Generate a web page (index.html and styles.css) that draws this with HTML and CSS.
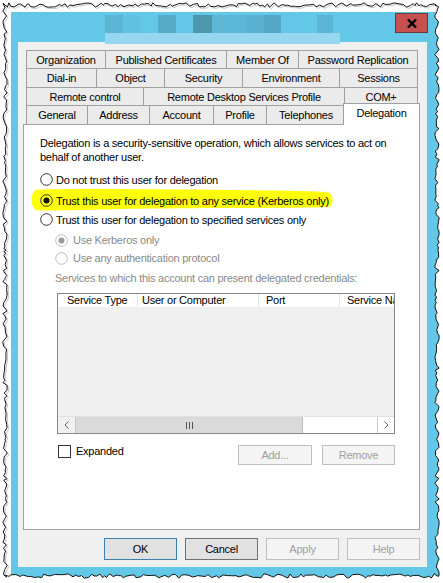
FILE: index.html
```html
<!DOCTYPE html>
<html>
<head>
<meta charset="utf-8">
<title>Delegation</title>
<link rel="stylesheet" href="styles.css">
</head>
<body>
<div class="frame">
  <div class="titlebar">
    <span class="blk b1"></span><span class="blk b2"></span><span class="blk b3"></span><span class="blk b4"></span><span class="blk b5"></span><span class="blk b6"></span><span class="blk b7"></span><span class="blk b8"></span>
    <div class="close"><svg width="10" height="9" viewBox="0 0 10 9"><path d="M1,0.5L9,8.5M9,0.5L1,8.5" stroke="#000" stroke-width="2.4" fill="none"/></svg></div>
  </div>
  <div class="client">
    <div class="tabs">
      <div class="row r1">
        <div class="tab">Organization</div><div class="tab">Published Certificates</div><div class="tab">Member Of</div><div class="tab last">Password Replication</div>
      </div>
      <div class="row r2">
        <div class="tab">Dial-in</div><div class="tab">Object</div><div class="tab">Security</div><div class="tab">Environment</div><div class="tab last">Sessions</div>
      </div>
      <div class="row r3">
        <div class="tab">Remote control</div><div class="tab">Remote Desktop Services Profile</div><div class="tab last">COM+</div>
      </div>
      <div class="row r4">
        <div class="tab">General</div><div class="tab">Address</div><div class="tab">Account</div><div class="tab">Profile</div><div class="tab">Telephones</div><div class="tab last sel">Delegation</div>
      </div>
    </div>
    <div class="panel">
      <svg class="hl" width="304" height="24" viewBox="0 0 304 24"><path d="M7,1.5 C40,0.5 120,1 200,2 C250,2.5 290,3 298,4.5 C304,6 304,17 299,19 C260,20.5 200,19.5 120,20.5 C70,21.5 30,22.5 8,22.5 C0,22.5 -0.5,3 7,1.5 Z" fill="#FFFF0A"/></svg>
      <p class="desc">Delegation is a security-sensitive operation, which allows services to act on<br>behalf of another user.</p>
      <div class="opt o1">
        <svg class="radio" width="13" height="13" viewBox="0 0 13 13"><circle cx="6.5" cy="6.5" r="5.8" fill="none" stroke="#333" stroke-width="1"/></svg>
        <span>Do not trust this user for delegation</span>
      </div>
      <div class="opt o2">
        <svg class="radio" width="13" height="13" viewBox="0 0 13 13"><circle cx="6.5" cy="6.5" r="5.8" fill="none" stroke="#333" stroke-width="1"/><circle cx="6.5" cy="6.5" r="3" fill="#111"/></svg>
        <span>Trust this user for delegation to any service (Kerberos only)</span>
      </div>
      <div class="opt o3">
        <svg class="radio" width="13" height="13" viewBox="0 0 13 13"><circle cx="6.5" cy="6.5" r="5.8" fill="none" stroke="#333" stroke-width="1"/></svg>
        <span>Trust this user for delegation to specified services only</span>
      </div>
      <div class="sub">
        <div class="opt sopt dis">
          <svg class="radio" width="13" height="13" viewBox="0 0 13 13"><circle cx="6.5" cy="6.5" r="5.8" fill="#fff" stroke="#BCBCBC" stroke-width="1"/><circle cx="6.5" cy="6.5" r="3" fill="#9A9A9A"/></svg>
          <span>Use Kerberos only</span>
        </div>
        <div class="opt sopt dis">
          <svg class="radio" width="13" height="13" viewBox="0 0 13 13"><circle cx="6.5" cy="6.5" r="5.8" fill="#fff" stroke="#BCBCBC" stroke-width="1"/></svg>
          <span>Use any authentication protocol</span>
        </div>
        <div class="label dis">Services to which this account can present delegated credentials:</div>
      </div>
      <div class="list">
        <div class="lhead">
          <div class="col c1">Service Type</div><div class="col c2">User or Computer</div><div class="col c3">Port</div><div class="col c4">Service Name</div>
        </div>
        <div class="lbody"></div>
        <div class="scroll">
          <div class="sbtn sleft"><svg width="5" height="8" viewBox="0 0 5 8"><path d="M4.5,0.5L1,4L4.5,7.5" stroke="#606060" fill="none"/></svg></div>
          <div class="thumb"><svg width="7" height="7" viewBox="0 0 7 7"><path d="M0.5,0V7M3.5,0V7M6.5,0V7" stroke="#555" fill="none"/></svg></div>
          <div class="track"></div>
          <div class="sbtn sright"><svg width="5" height="8" viewBox="0 0 5 8"><path d="M0.5,0.5L4,4L0.5,7.5" stroke="#606060" fill="none"/></svg></div>
        </div>
      </div>
      <div class="below">
        <span class="check"></span>
        <span class="chklabel">Expanded</span>
        <div class="btn dbtn add">Add...</div>
        <div class="btn dbtn remove">Remove</div>
      </div>
    </div>
    <div class="buttons">
      <div class="btn ok">OK</div>
      <div class="btn cancel">Cancel</div>
      <div class="btn dbtn">Apply</div>
      <div class="btn dbtn">Help</div>
    </div>
  </div>
</div>
<div class="band"></div>
<svg class="torn" width="443" height="583" viewBox="0 0 443 583">
  <path id="tornShadow" d="" fill="none" stroke="#C4C4C4" stroke-width="1" transform="translate(1.5,1.5)"/>
  <path id="tornMask" d="" fill="#fff" fill-rule="evenodd"/>
  <path id="tornLine" d="" fill="none" stroke="#111" stroke-width="1"/>
</svg>
<script src="script.js"></script>
</body>
</html>
```
FILE: styles.css
```css
* { box-sizing: border-box; margin: 0; padding: 0; }
html, body { background: #fff; }
body {
  margin: 0;
  width: 443px;
  height: 583px;
  overflow: hidden;
  position: relative;
  font-family: "Liberation Sans", Arial, sans-serif;
  font-size: 11px;
  letter-spacing: -0.25px;
  color: #000;
}
.frame {
  margin: 12px 0 0 11px;
  width: 430px;
  height: 568px;
  background: #63C8E8;
  display: flex;
  flex-direction: column;
}
.titlebar {
  height: 30px;
  display: flex;
  align-items: flex-start;
  padding: 3px 0 0 94px;
}
.blk { display: block; height: 18px; flex: none; }
.b1 { width: 18px; background: #5AB6D4; }
.b2 { width: 17px; background: #60C1E0; }
.b3 { width: 18px; margin-left: 18px; background: #56ABC9; }
.b4 { width: 19px; margin-left: 17px; background: #4B97AD; }
.b5 { width: 35px; background: #5CB6D6; }
.b6 { width: 17px; background: #59B0D0; }
.b7 { width: 17px; background: #53A6C5; }
.b8 { width: 16px; margin-left: 36px; background: #5BB6D5; }
.close {
  margin-left: auto;
  margin-right: 13px;
  margin-top: -2px;
  width: 33px;
  height: 20px;
  background: #C75050;
  border: 1px solid #6A3A3A;
  display: flex;
  align-items: center;
  justify-content: center;
}
.band {
  position: absolute;
  left: 105px;
  top: 33px;
  width: 235px;
  height: 11px;
  background: #96D6EE;
}
.client {
  margin: 0 14px 0 7px;
  height: 525px;
  background: #F0F0F0;
  padding-top: 8px;
}
.tabs { padding-left: 8px; }
.row { display: grid; width: 392px; }
.r1 { height: 18px; grid-template-columns: 79px 121px 72px 120px; }
.r2 { height: 19px; grid-template-columns: 70px 68px 78px 97px 79px; }
.r3 { height: 18px; grid-template-columns: 117px 201px 74px; }
.r4 { height: 19px; grid-template-columns: 61px 62px 64px 53px 79px 73px; }
.tab {
  border-top: 1px solid #A0A0A0;
  border-left: 1px solid #A0A0A0;
  background: #EBEBEB;
  display: flex;
  align-items: center;
  justify-content: center;
  white-space: nowrap;
  line-height: 1;
  padding-top: 1px;
}
.tab.last { border-right: 1px solid #A0A0A0; }
.tab.sel {
  background: #fff;
  margin: -2px -2px -1px -2px;
  position: relative;
  z-index: 2;
  padding-top: 0;
  padding-bottom: 2px;
}
.panel {
  margin-left: 5px;
  width: 397px;
  height: 406px;
  border: 1px solid #A0A0A0;
  background: #fff;
  position: relative;
  padding: 11px 0 0 16px;
}
.hl { position: absolute; left: 6px; top: 63px; }
.desc { line-height: 14px; white-space: nowrap; position: relative; }
.opt {
  display: flex;
  align-items: center;
  height: 19px;
  white-space: nowrap;
  position: relative;
}
.opt .radio { flex: none; margin-right: 3px; }
.o1 { margin-top: 6px; }
.o2 { margin-top: 2px; }
.sub { padding-left: 15px; }
.sopt { height: 18px; }
.sopt:first-child { margin-top: 2px; }
.sopt .radio { margin-right: 5px; }
.dis { color: #8A8A8A; }
.label { height: 17px; line-height: 17px; margin-top: 3px; white-space: nowrap; }
.list {
  margin-top: 6px;
  margin-left: 17px;
  width: 338px;
  height: 141px;
  border: 1px solid #828790;
  display: flex;
  flex-direction: column;
  background: #F0F0F0;
}
.lhead {
  height: 13px;
  display: flex;
  background: #fff;
  flex: none;
  overflow: hidden;
}
.col {
  flex: none;
  border-right: 1px solid #E5E5E5;
  line-height: 13px;
  white-space: nowrap;
  overflow: hidden;
}
.c1 { width: 80px; padding-left: 9px; }
.c2 { width: 121px; padding-left: 4px; }
.c3 { width: 81px; padding-left: 7px; }
.c4 { width: 90px; padding-left: 7px; border-right: none; }
.lbody { flex: 1; }
.scroll {
  height: 17px;
  flex: none;
  display: flex;
  border-top: 1px solid #E0E0E0;
  background: #fff;
}
.sbtn {
  width: 18px;
  display: flex;
  align-items: center;
  justify-content: center;
  flex: none;
}
.sleft { border-right: 1px solid #C8C8C8; background: #F0F0F0; }
.sright { width: 17px; border-left: 1px solid #C8C8C8; }
.thumb {
  width: 227px;
  flex: none;
  background: #DADADA;
  border-right: 1px solid #BFBFBF;
  display: flex;
  align-items: center;
  justify-content: center;
}
.track { flex: 1; }
.below {
  margin-top: 11px;
  margin-left: 18px;
  width: 337px;
  height: 20px;
  display: flex;
  align-items: flex-start;
}
.check {
  width: 13px;
  height: 13px;
  border: 1px solid #333;
  background: #fff;
  flex: none;
}
.chklabel { margin-left: 5px; line-height: 13px; }
.btn {
  display: flex;
  align-items: center;
  justify-content: center;
  width: 73px;
  height: 22px;
  border: 1px solid #ADADAD;
  background: #E1E1E1;
  flex: none;
}
.dbtn { border-color: #BFBFBF; background: #F4F4F4; color: #A0A0A0; }
.add { margin-left: auto; width: 74px; height: 20px; }
.remove { margin-left: 10px; height: 20px; }
.buttons {
  margin-top: 8px;
  display: flex;
  justify-content: flex-end;
  gap: 8px;
  padding-right: 7px;
}
.ok { border-color: #3C7FB1; }
.cancel { border-color: #707070; }
.torn { position: absolute; left: 0; top: 0; pointer-events: none; z-index: 10; }
```
FILE: script.js
```js
(function () {
  var s = 12345;
  function r() { s = (s * 16807) % 2147483647; return (s - 1) / 2147483646; }
  var pts = [], x, y;
  for (x = 3; x < 438; x += 1.5 + r() * 3.5) pts.push([x, 5 + (r() - 0.5) * 4.5]);
  for (y = 5; y < 577; y += 1.5 + r() * 3.5) pts.push([437 + (r() - 0.5) * 4.5, y]);
  for (x = 438; x > 3; x -= 1.5 + r() * 3.5) pts.push([x, 576 + (r() - 0.5) * 4.5]);
  for (y = 577; y > 5; y -= 1.5 + r() * 3.5) pts.push([5 + (r() - 0.5) * 4.5, y]);
  var d = 'M' + pts.map(function (p) { return p[0].toFixed(1) + ',' + p[1].toFixed(1); }).join('L') + 'Z';
  document.getElementById('tornMask').setAttribute('d', 'M-2,-2H445V585H-2Z' + d);
  document.getElementById('tornLine').setAttribute('d', d);
  document.getElementById('tornShadow').setAttribute('d', d);
})();
```
